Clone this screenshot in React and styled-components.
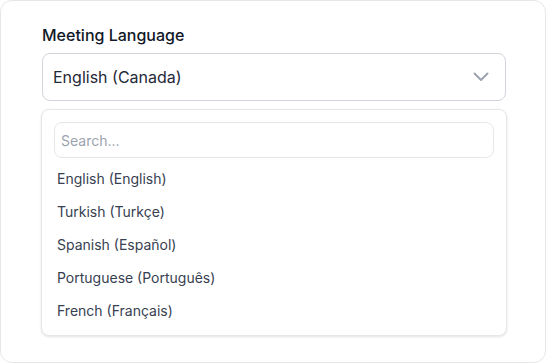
import React from "react";
import styled, { createGlobalStyle } from "styled-components";

const Global = createGlobalStyle`
  html, body { margin: 0; padding: 0; background: #ffffff; }
  body { font-family: Inter, "Noto Sans", sans-serif; -webkit-font-smoothing: antialiased; }
  * { box-sizing: border-box; }
`;

const Card = styled.div`
  width: 546px;
  height: 363px;
  border: 1px solid #e5e7eb;
  border-radius: 12px;
  background: #ffffff;
  padding: 22px 39px 0 41px;
  display: flex;
  flex-direction: column;
`;

const Label = styled.label`
  font-size: 16px;
  line-height: 24px;
  font-weight: 500;
  color: #111827;
  margin-bottom: 6px;
`;

const Select = styled.div`
  height: 48px;
  border: 1px solid #d1d5db;
  border-radius: 8px;
  padding: 0 16px 0 10px;
  display: flex;
  align-items: center;
  justify-content: space-between;
  font-size: 16px;
  color: #1f2937;
  background: #fff;
`;

const Chevron = styled.svg`
  width: 16px;
  height: 10px;
  color: #9ca3af;
`;

const Menu = styled.div`
  margin: 8px -1px 0;
  border: 1px solid #e5e7eb;
  border-radius: 8px;
  box-shadow: 0 1px 3px rgba(0, 0, 0, 0.08), 0 1px 2px rgba(0, 0, 0, 0.04);
  padding: 12px 12px 8px;
  display: flex;
  flex-direction: column;
  background: #fff;
`;

const Search = styled.input`
  height: 36px;
  border: 1.5px solid #e5e7eb;
  border-radius: 8px;
  padding: 0 6px;
  font-family: inherit;
  font-size: 14px;
  color: #111827;
  outline: none;
  margin-bottom: 4px;
  &::placeholder { color: #9ca3af; }
`;

const List = styled.ul`
  list-style: none;
  margin: 0;
  padding: 0;
`;

const Item = styled.li`
  padding: 6px 3px;
  font-size: 14px;
  line-height: 21px;
  color: #374151;
`;

const languages = [
  "English (English)",
  "Turkish (Turkçe)",
  "Spanish (Español)",
  "Portuguese (Português)",
  "French (Français)",
];

export default function App() {
  return (
    <>
      <Global />
      <Card>
        <Label>Meeting Language</Label>
        <Select>
          <span>English (Canada)</span>
          <Chevron viewBox="0 0 16 10" fill="none">
            <polyline points="1.5,1.5 8,8 14.5,1.5" stroke="currentColor" strokeWidth="2" strokeLinecap="round" strokeLinejoin="round" />
          </Chevron>
        </Select>
        <Menu>
          <Search placeholder="Search..." />
          <List>
            {languages.map((l) => (
              <Item key={l}>{l}</Item>
            ))}
          </List>
        </Menu>
      </Card>
    </>
  );
}
